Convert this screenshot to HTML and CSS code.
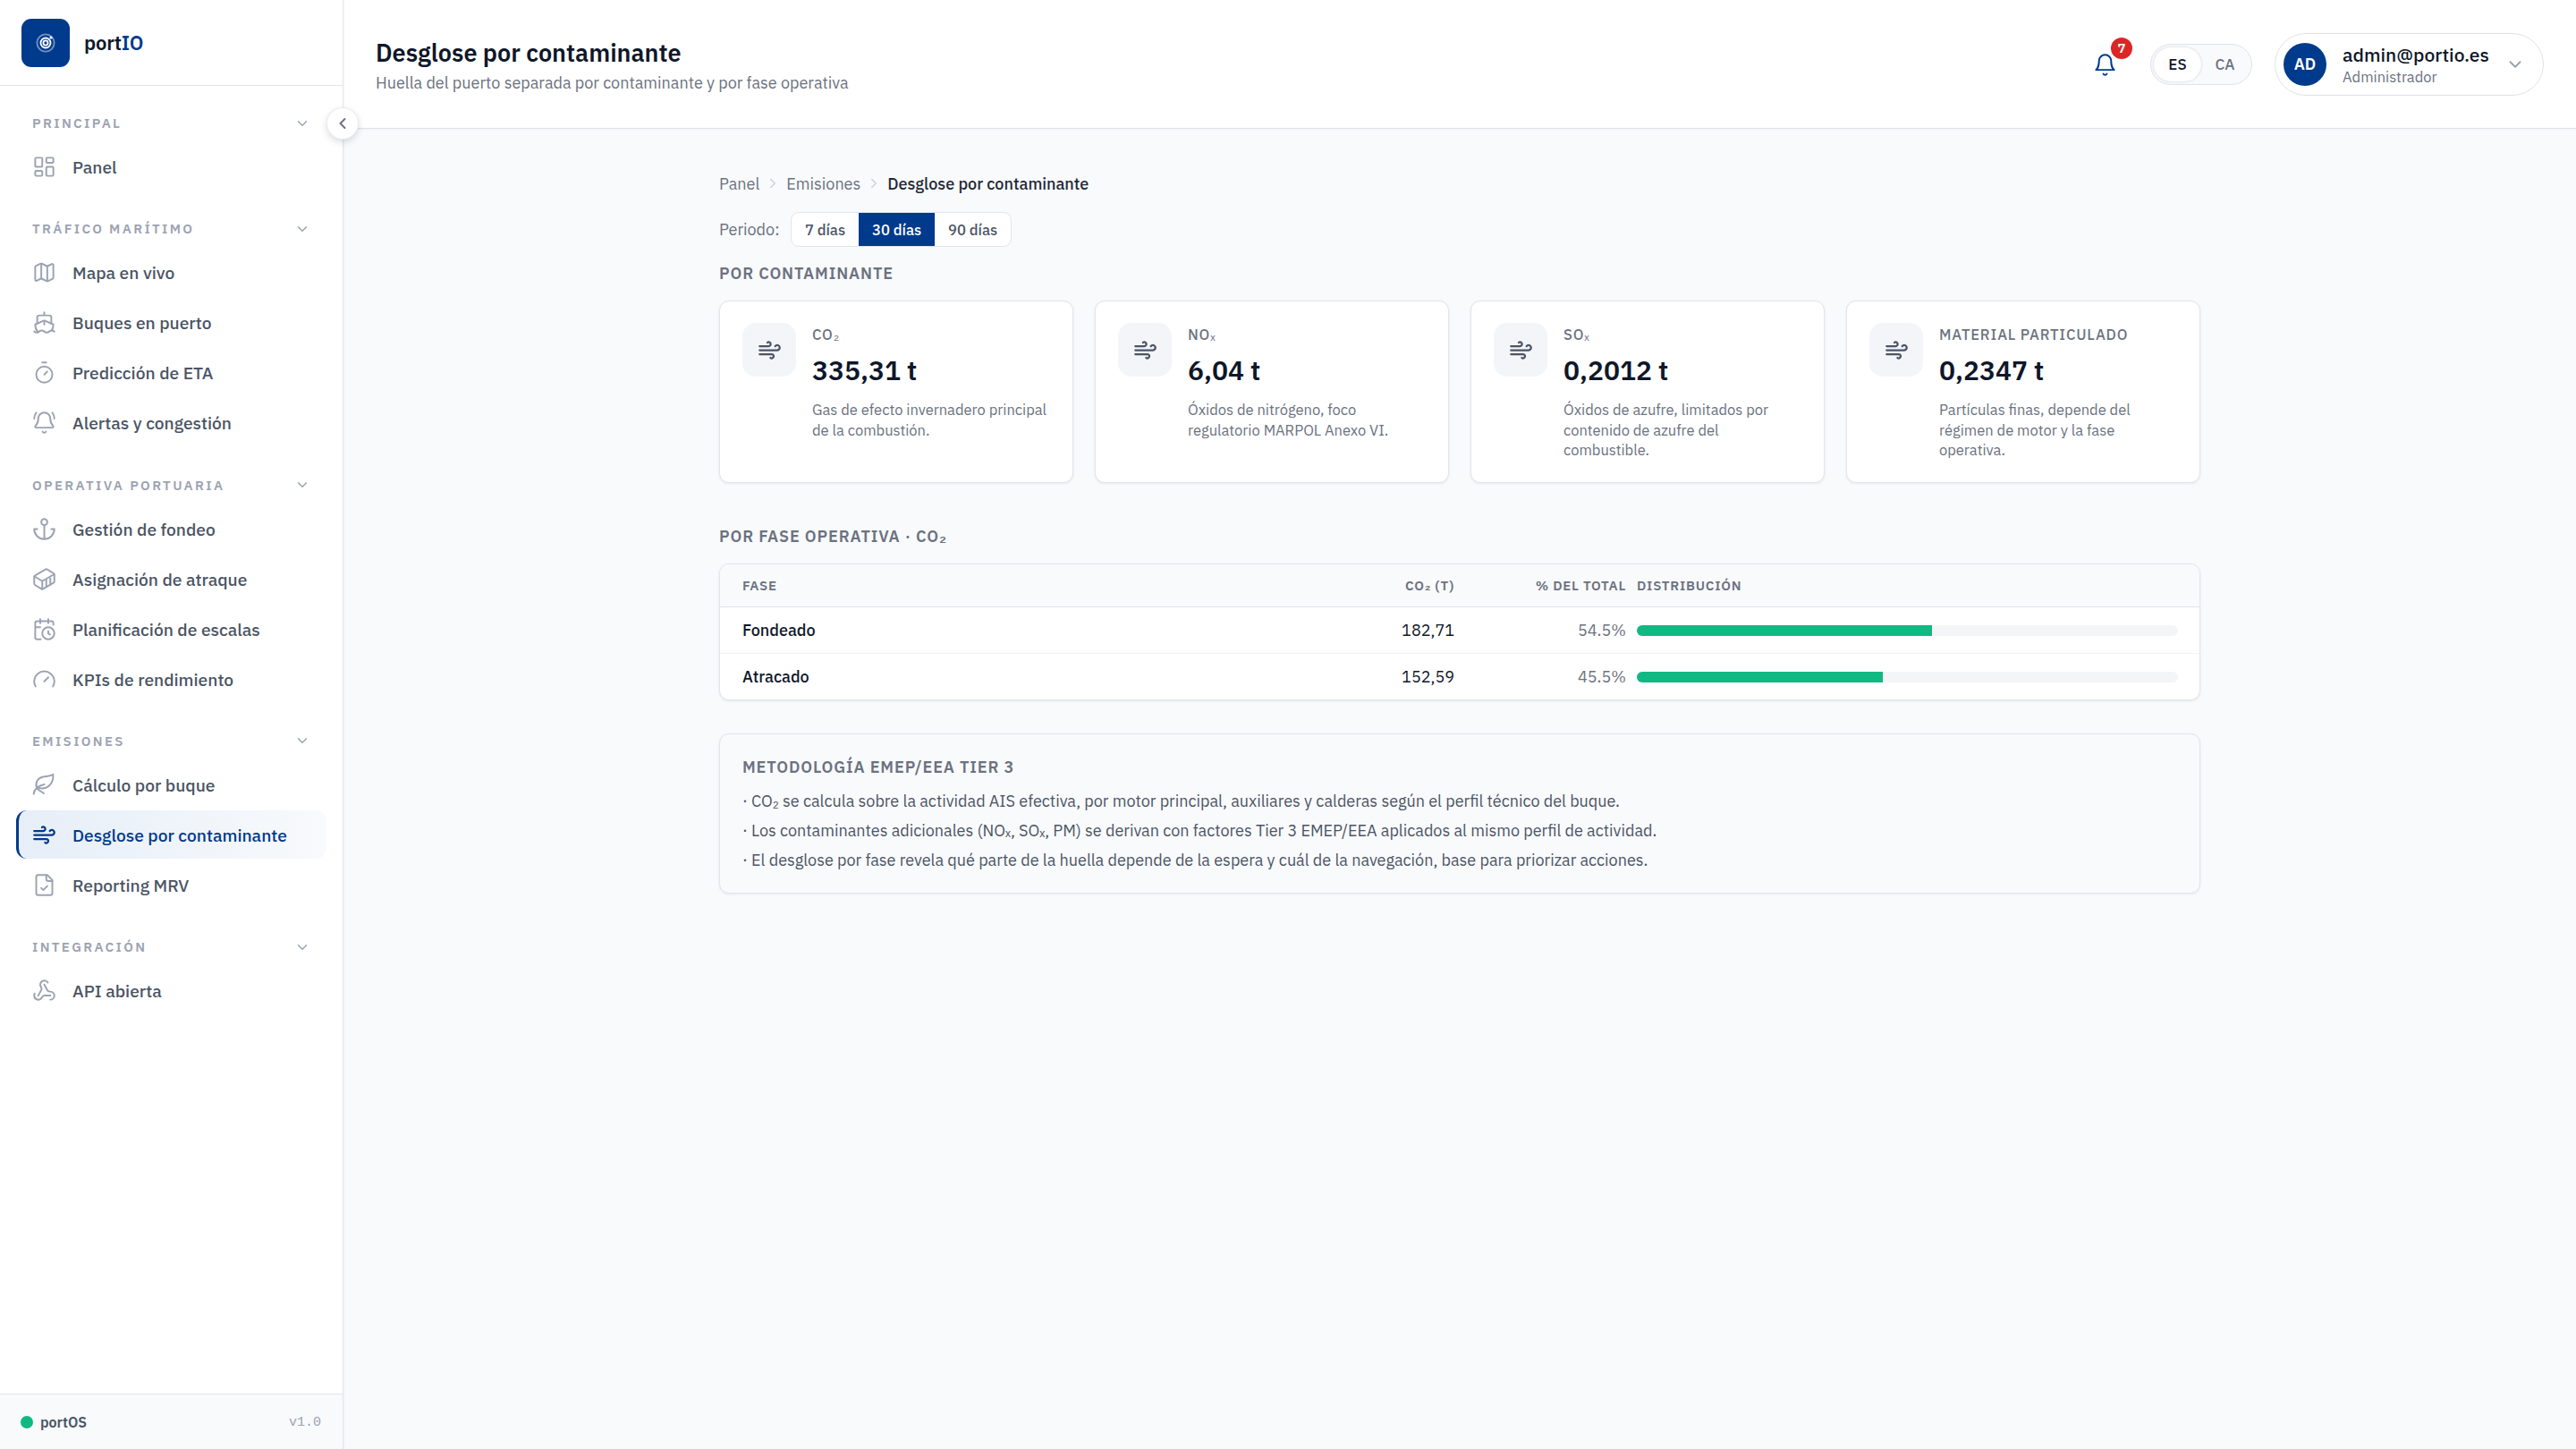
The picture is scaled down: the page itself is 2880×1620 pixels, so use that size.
FILE: index.html
```html
<!DOCTYPE html>
<html lang="es">
<head>
  <meta charset="UTF-8" />
  <meta name="viewport" content="width=device-width, initial-scale=1.0"/>
  <title>Desglose por contaminante - portIO</title>
  <link rel="stylesheet" href="styles.css">
</head>
<body>
  <svg class="sprite" aria-hidden="true">
    <symbol id="i-chevron" viewBox="0 0 24 24"><path d="m6 9 6 6 6-6"/></symbol>
    <symbol id="i-left" viewBox="0 0 24 24"><path d="m15 18-6-6 6-6"/></symbol>
    <symbol id="i-right" viewBox="0 0 24 24"><path d="m9 18 6-6-6-6"/></symbol>
    <symbol id="i-panel" viewBox="0 0 24 24"><rect x="3" y="3" width="7" height="9" rx="1"/><rect x="14" y="3" width="7" height="5" rx="1"/><rect x="14" y="12" width="7" height="9" rx="1"/><rect x="3" y="16" width="7" height="5" rx="1"/></symbol>
    <symbol id="i-map" viewBox="0 0 24 24"><path d="M14.106 5.553a2 2 0 0 0 1.788 0l3.659-1.83A1 1 0 0 1 21 4.619v12.764a1 1 0 0 1-.553.894l-4.553 2.277a2 2 0 0 1-1.788 0l-4.212-2.106a2 2 0 0 0-1.788 0l-3.659 1.83A1 1 0 0 1 3 19.381V6.618a1 1 0 0 1 .553-.894l4.553-2.277a2 2 0 0 1 1.788 0z"/><path d="M15 5.764v15M9 3.236v15"/></symbol>
    <symbol id="i-ship" viewBox="0 0 24 24"><path d="M12 10.189V14M12 2v3M19 13V7a2 2 0 0 0-2-2H7a2 2 0 0 0-2 2v6"/><path d="M19.38 20A11.6 11.6 0 0 0 21 14l-8.188-3.639a2 2 0 0 0-1.624 0L3 14a11.6 11.6 0 0 0 2.81 7.76"/><path d="M2 21c.6.5 1.2 1 2.5 1 2.5 0 2.5-2 5-2 1.3 0 1.9.5 2.5 1s1.2 1 2.5 1c2.5 0 2.5-2 5-2 1.3 0 1.9.5 2.5 1"/></symbol>
    <symbol id="i-timer" viewBox="0 0 24 24"><path d="M10 2h4M12 14l3-3"/><circle cx="12" cy="14" r="8"/></symbol>
    <symbol id="i-bellring" viewBox="0 0 24 24"><path d="M10.268 21a2 2 0 0 0 3.464 0M22 8c0-2.3-.8-4.3-2-6M4 2C2.8 3.7 2 5.7 2 8"/><path d="M3.262 15.326A1 1 0 0 0 4 17h16a1 1 0 0 0 .74-1.673C19.41 13.956 18 12.499 18 8A6 6 0 0 0 6 8c0 4.499-1.411 5.956-2.738 7.326"/></symbol>
    <symbol id="i-bell" viewBox="0 0 24 24"><path d="M18 8A6 6 0 0 0 6 8c0 7-3 9-3 9h18s-3-2-3-9M13.73 21a2 2 0 0 1-3.46 0"/></symbol>
    <symbol id="i-anchor" viewBox="0 0 24 24"><path d="M12 22V8M5 12H2a10 10 0 0 0 20 0h-3"/><circle cx="12" cy="5" r="3"/></symbol>
    <symbol id="i-container" viewBox="0 0 24 24"><path d="M22 7.7c0-.6-.4-1.2-.8-1.5l-6.3-3.9a1.72 1.72 0 0 0-1.7 0l-10.3 6c-.5.2-.9.8-.9 1.4v6.6c0 .5.4 1.2.8 1.5l6.3 3.9a1.72 1.72 0 0 0 1.7 0l10.3-6c.5-.3.9-1 .9-1.5Z"/><path d="M10 21.9V14L2.1 9.1M10 14l11.9-6.9M14 19.8v-8.1M18 17.5V9.4"/></symbol>
    <symbol id="i-calendar" viewBox="0 0 24 24"><path d="M16 14v2.2l1.6 1M16 2v4M21 7.5V6a2 2 0 0 0-2-2H5a2 2 0 0 0-2 2v14a2 2 0 0 0 2 2h3.5M3 10h5M8 2v4"/><circle cx="16" cy="16" r="6"/></symbol>
    <symbol id="i-gauge" viewBox="0 0 24 24"><path d="m12 14 4-4M3.34 19a10 10 0 1 1 17.32 0"/></symbol>
    <symbol id="i-leaf" viewBox="0 0 24 24"><path d="M5 15.500C2.500 11 4.500 5.500 11 4c4-.8 7-.6 9.700-2.500C21.500 7 18.500 15 10 15.500c-2.500 0-4-.3-5-1"/><path d="M1.500 21c.5-5 4-8 10.500-9.500M5 16l6.500 4.500"/></symbol>
    <symbol id="i-wind" viewBox="0 0 24 24"><path d="M12.8 19.6A2 2 0 1 0 14 16H2M17.500 8a2.500 2.500 0 1 1 2 4H2M9.800 4.400A2 2 0 1 1 11 8H2"/></symbol>
    <symbol id="i-file" viewBox="0 0 24 24"><path d="M15 2H6a2 2 0 0 0-2 2v16a2 2 0 0 0 2 2h12a2 2 0 0 0 2-2V7Z"/><path d="M14 2v4a2 2 0 0 0 2 2h4M9 15l2 2 4-4"/></symbol>
    <symbol id="i-webhook" viewBox="0 0 24 24"><path d="M18 16.98h-5.99c-1.1 0-1.95.94-2.48 1.9A4 4 0 0 1 2 17c.01-.7.2-1.4.57-2"/><path d="m6 17 3.130-5.780c.53-.97.1-2.180-.5-3.100a4 4 0 1 1 6.890-4.060"/><path d="m12 6 3.130 5.730C15.660 12.700 16.900 13 18 13a4 4 0 0 1 0 8"/></symbol>
  </svg>

  <div class="app">
    <aside class="sidebar">
      <div class="brand">
        <div class="brand-logo">
          <svg viewBox="0 0 24 24"><circle cx="12" cy="12" r="10.500" opacity=".45"/><circle cx="12" cy="12" r="6"/><circle cx="12" cy="12" r="2.800"/><circle class="dot" cx="18.500" cy="5.500" r="1.700"/></svg>
        </div>
        <span class="brand-name">port<b>IO</b></span>
      </div>
      <button class="collapse"><svg class="icon"><use href="#i-left"/></svg></button>

      <nav class="nav">
        <div class="nav-group">
          <div class="nav-title"><span>PRINCIPAL</span><svg class="icon"><use href="#i-chevron"/></svg></div>
          <a class="nav-item"><svg class="icon"><use href="#i-panel"/></svg><span>Panel</span></a>
        </div>
        <div class="nav-group">
          <div class="nav-title"><span>TRÁFICO MARÍTIMO</span><svg class="icon"><use href="#i-chevron"/></svg></div>
          <a class="nav-item"><svg class="icon"><use href="#i-map"/></svg><span>Mapa en vivo</span></a>
          <a class="nav-item"><svg class="icon"><use href="#i-ship"/></svg><span>Buques en puerto</span></a>
          <a class="nav-item"><svg class="icon"><use href="#i-timer"/></svg><span>Predicción de ETA</span></a>
          <a class="nav-item"><svg class="icon"><use href="#i-bellring"/></svg><span>Alertas y congestión</span></a>
        </div>
        <div class="nav-group">
          <div class="nav-title"><span>OPERATIVA PORTUARIA</span><svg class="icon"><use href="#i-chevron"/></svg></div>
          <a class="nav-item"><svg class="icon"><use href="#i-anchor"/></svg><span>Gestión de fondeo</span></a>
          <a class="nav-item"><svg class="icon"><use href="#i-container"/></svg><span>Asignación de atraque</span></a>
          <a class="nav-item"><svg class="icon"><use href="#i-calendar"/></svg><span>Planificación de escalas</span></a>
          <a class="nav-item"><svg class="icon"><use href="#i-gauge"/></svg><span>KPIs de rendimiento</span></a>
        </div>
        <div class="nav-group">
          <div class="nav-title"><span>EMISIONES</span><svg class="icon"><use href="#i-chevron"/></svg></div>
          <a class="nav-item"><svg class="icon"><use href="#i-leaf"/></svg><span>Cálculo por buque</span></a>
          <a class="nav-item active"><svg class="icon"><use href="#i-wind"/></svg><span>Desglose por contaminante</span></a>
          <a class="nav-item"><svg class="icon"><use href="#i-file"/></svg><span>Reporting MRV</span></a>
        </div>
        <div class="nav-group">
          <div class="nav-title"><span>INTEGRACIÓN</span><svg class="icon"><use href="#i-chevron"/></svg></div>
          <a class="nav-item"><svg class="icon"><use href="#i-webhook"/></svg><span>API abierta</span></a>
        </div>
      </nav>

      <div class="sidebar-footer">
        <span class="status-dot"></span>
        <span class="status-name">portOS</span>
        <span class="version">v1.0</span>
      </div>
    </aside>

    <div class="main">
      <header class="header">
        <div class="heading">
          <h1>Desglose por contaminante</h1>
          <p>Huella del puerto separada por contaminante y por fase operativa</p>
        </div>
        <div class="bell">
          <svg class="icon"><use href="#i-bell"/></svg>
          <span class="badge">7</span>
        </div>
        <div class="lang"><span class="on">ES</span><span>CA</span></div>
        <div class="user">
          <div class="avatar">AD</div>
          <div class="user-text">
            <span class="user-mail">admin@portio.es</span>
            <span class="user-role">Administrador</span>
          </div>
          <svg class="icon"><use href="#i-chevron"/></svg>
        </div>
      </header>

      <main class="content">
        <div class="crumbs">
          <span>Panel</span>
          <svg class="icon"><use href="#i-right"/></svg>
          <span>Emisiones</span>
          <svg class="icon"><use href="#i-right"/></svg>
          <span class="current">Desglose por contaminante</span>
        </div>

        <div class="period">
          <span class="period-label">Periodo:</span>
          <div class="segment">
            <button>7 días</button><button class="on">30 días</button><button>90 días</button>
          </div>
        </div>

        <h2>POR CONTAMINANTE</h2>
        <div class="cards">
          <div class="card">
            <div class="card-icon"><svg class="icon"><use href="#i-wind"/></svg></div>
            <div class="card-body">
              <span class="card-label">CO<i>₂</i></span>
              <span class="card-value">335,31 t</span>
              <p>Gas de efecto invernadero principal<br>de la combustión.</p>
            </div>
          </div>
          <div class="card">
            <div class="card-icon"><svg class="icon"><use href="#i-wind"/></svg></div>
            <div class="card-body">
              <span class="card-label">NO<i>ₓ</i></span>
              <span class="card-value">6,04 t</span>
              <p>Óxidos de nitrógeno, foco<br>regulatorio MARPOL Anexo VI.</p>
            </div>
          </div>
          <div class="card">
            <div class="card-icon"><svg class="icon"><use href="#i-wind"/></svg></div>
            <div class="card-body">
              <span class="card-label">SO<i>ₓ</i></span>
              <span class="card-value">0,2012 t</span>
              <p>Óxidos de azufre, limitados por<br>contenido de azufre del<br>combustible.</p>
            </div>
          </div>
          <div class="card">
            <div class="card-icon"><svg class="icon"><use href="#i-wind"/></svg></div>
            <div class="card-body">
              <span class="card-label">MATERIAL PARTICULADO</span>
              <span class="card-value">0,2347 t</span>
              <p>Partículas finas, depende del<br>régimen de motor y la fase<br>operativa.</p>
            </div>
          </div>
        </div>

        <h2>POR FASE OPERATIVA · CO<i>₂</i></h2>
        <div class="table">
          <div class="row head">
            <span>FASE</span><span class="num">CO<i>₂</i> (T)</span><span class="num">% DEL TOTAL</span><span>DISTRIBUCIÓN</span>
          </div>
          <div class="row">
            <span class="phase">Fondeado</span><span class="num">182,71</span><span class="num pct">54.5%</span>
            <div class="bar"><div class="fill" style="width: 54.5%"></div></div>
          </div>
          <div class="row">
            <span class="phase">Atracado</span><span class="num">152,59</span><span class="num pct">45.5%</span>
            <div class="bar"><div class="fill" style="width: 45.5%"></div></div>
          </div>
        </div>

        <section class="method">
          <h3>METODOLOGÍA EMEP/EEA TIER 3</h3>
          <p>· CO<i>₂</i> se calcula sobre la actividad AIS efectiva, por motor principal, auxiliares y calderas según el perfil técnico del buque.</p>
          <p>· Los contaminantes adicionales (NO<i>ₓ</i>, SO<i>ₓ</i>, PM) se derivan con factores Tier 3 EMEP/EEA aplicados al mismo perfil de actividad.</p>
          <p>· El desglose por fase revela qué parte de la huella depende de la espera y cuál de la navegación, base para priorizar acciones.</p>
        </section>
      </main>
    </div>
  </div>
</body>
</html>
```

FILE: styles.css
```css
* {
  margin: 0;
  padding: 0;
  box-sizing: border-box;
}

body {
  font-family: 'IBM Plex Sans', Roboto, 'Liberation Sans', sans-serif;
  font-size: 18px;
  color: #0f1729;
  background: #f9fafc;
}

button {
  font: inherit;
  border: none;
  background: none;
}

/* chemical subscripts */
i {
  font-family: 'Liberation Sans', sans-serif;
  font-style: normal;
  line-height: 1;
}

.sprite {
  display: none;
}

.icon {
  flex: none;
  width: 27px;
  height: 27px;
  fill: none;
  stroke: currentColor;
  stroke-width: 1.75;
  stroke-linecap: round;
  stroke-linejoin: round;
}

.app {
  display: flex;
  height: 1620px;
}

/* sidebar */
.sidebar {
  position: relative;
  z-index: 2;
  display: flex;
  flex-direction: column;
  flex: none;
  width: 384px;
  background: #fff;
  border-right: 1px solid #e2e5ea;
  box-shadow: 1px 0 3px rgba(15, 23, 42, 0.04);
}

.brand {
  display: flex;
  align-items: center;
  gap: 16px;
  height: 96px;
  padding: 0 24px;
  border-bottom: 1px solid #e2e5ea;
}

.brand-logo {
  display: flex;
  align-items: center;
  justify-content: center;
  width: 54px;
  height: 54px;
  border-radius: 11px;
  background: #003a8c;
}

.brand-logo svg {
  width: 22px;
  height: 22px;
  fill: none;
  stroke: #fff;
  stroke-width: 2;
}

.brand-logo .dot {
  fill: #fff;
  stroke: none;
}

.brand-name {
  font-size: 22px;
  font-weight: 600;
  letter-spacing: -0.2px;
}

.brand-name b {
  font-weight: 600;
  color: #003a8c;
}

.collapse {
  position: absolute;
  top: 121px;
  right: -17px;
  display: flex;
  align-items: center;
  justify-content: center;
  width: 34px;
  height: 34px;
  border-radius: 50%;
  background: #fff;
  color: #6b7280;
  box-shadow: 0 0 0 1px #e9ecf1, 0 3px 8px rgba(15, 23, 42, 0.18);
}

.collapse .icon {
  width: 20px;
  height: 20px;
  stroke-width: 2.4;
}

.nav {
  flex: 1;
  padding: 21.5px 18px 0;
}

.nav-group {
  margin-bottom: 22.3px;
}

.nav-title {
  display: flex;
  align-items: center;
  justify-content: space-between;
  height: 40px;
  margin-bottom: 2px;
  padding: 0 18px;
  font-size: 15px;
  font-weight: 600;
  letter-spacing: 2.34px;
  color: #9ca3b2;
}

.nav-title .icon {
  width: 18px;
  height: 18px;
  stroke-width: 2;
}

.nav-item {
  display: flex;
  align-items: center;
  gap: 18px;
  height: 54px;
  margin-bottom: 2px;
  padding-left: 18px;
  border-radius: 12px;
  font-size: 19.2px;
  font-weight: 500;
  color: #4b5565;
}

.nav-item .icon {
  color: #9ca3b2;
}

.nav-item.active {
  padding-left: 15px;
  border-left: 3px solid #003a8c;
  background: linear-gradient(90deg, #e6eef8, #f8fafc);
  color: #003a8c;
}

.nav-item.active .icon {
  color: #003a8c;
  stroke-width: 2;
}

.sidebar-footer {
  display: flex;
  align-items: center;
  gap: 8px;
  height: 62px;
  padding: 0 24px 0 23px;
  border-top: 1px solid #e2e5ea;
  background: #f9fafc;
}

.status-dot {
  width: 14px;
  height: 14px;
  border-radius: 50%;
  background: #10b981;
}

.status-name {
  flex: 1;
  font-size: 16px;
  font-weight: 600;
  color: #4b5565;
}

.version {
  padding-top: 2px;
  font-family: 'Liberation Mono', monospace;
  font-size: 15px;
  color: #9ca3b2;
}

/* header */
.main {
  flex: 1;
  min-width: 0;
}

.header {
  display: flex;
  align-items: center;
  height: 144px;
  padding: 1px 36px 0;
  background: #fff;
  border-bottom: 1px solid #dfe2e8;
  box-shadow: 0 1px 2px rgba(15, 23, 42, 0.04);
}

.heading {
  flex: 1;
  padding-top: 2px;
}

h1 {
  font-size: 27px;
  line-height: 36px;
  font-weight: 600;
}

.heading p {
  margin-top: 3px;
  font-size: 18px;
  line-height: 26px;
  color: #6b7280;
}

.bell {
  position: relative;
  display: flex;
  margin-right: 37px;
  color: #003a8c;
}

.badge {
  position: absolute;
  top: -17px;
  right: -17px;
  width: 24px;
  height: 24px;
  border-radius: 50%;
  background: #dc2626;
  color: #fff;
  font-size: 15px;
  font-weight: 600;
  line-height: 24px;
  text-align: center;
}

.lang {
  display: flex;
  align-items: center;
  height: 46px;
  margin-right: 25px;
  padding: 3px;
  border: 1px solid #dfe2e8;
  border-radius: 23px;
  background: #f9fafc;
  font-size: 17px;
  font-weight: 500;
  color: #6b7280;
}

.lang span {
  width: 53px;
  line-height: 38px;
  text-align: center;
}

.lang .on {
  border-radius: 19px;
  background: #fff;
  color: #0f1729;
  box-shadow: 0 0 2px 1px #e2e5ea;
}

.user {
  display: flex;
  align-items: center;
  width: 301px;
  height: 70px;
  padding: 0 20px 0 9px;
  border: 1px solid #dfe2e8;
  border-radius: 35px;
}

.avatar {
  width: 48px;
  height: 48px;
  margin-right: 18px;
  border-radius: 50%;
  background: #003a8c;
  color: #fff;
  font-size: 18px;
  font-weight: 600;
  line-height: 48px;
  text-align: center;
}

.user-text {
  flex: 1;
  display: flex;
  flex-direction: column;
  align-items: flex-start;
  padding-top: 2px;
}

.user-mail {
  font-size: 21px;
  font-weight: 500;
  line-height: 26px;
}

.user-role {
  font-size: 16.5px;
  line-height: 24px;
  color: #6b7280;
}

.user .icon {
  width: 22px;
  height: 22px;
  color: #9ca3b2;
  stroke-width: 2.2;
}

/* content */
.content {
  width: 1656px;
  margin: 0 auto;
  padding-top: 47px;
}

.crumbs {
  display: flex;
  align-items: center;
  height: 28px;
  font-size: 18px;
  color: #6b7280;
}

.crumbs .icon {
  width: 18px;
  height: 18px;
  margin: 0 6px;
  color: #cbd0d9;
  stroke-width: 2;
}

.crumbs .current {
  font-weight: 500;
  color: #1f2937;
}

.period {
  display: flex;
  align-items: center;
  gap: 12.5px;
  height: 40px;
  margin-top: 17.5px;
  color: #6b7280;
}

.segment {
  display: flex;
  overflow: hidden;
  height: 39px;
  border: 1px solid #e2e5ea;
  border-radius: 9px;
  background: #fff;
}

.segment button {
  padding: 0 15px;
  font-size: 16.5px;
  font-weight: 500;
  color: #4b5565;
}

.segment .on {
  background: #003a8c;
  color: #fff;
}

h2 {
  margin-top: 15px;
  font-size: 18px;
  font-weight: 600;
  line-height: 27px;
  letter-spacing: 0.9px;
  color: #6b7280;
}

.cards {
  display: grid;
  grid-template-columns: repeat(4, 1fr);
  gap: 24px;
  margin: 17.5px 0 45.5px;
}

.card {
  display: flex;
  gap: 18px;
  height: 204px;
  padding: 24px 24px 24px 25px;
  border: 1px solid #e2e5ea;
  border-radius: 11px;
  background: #fff;
  box-shadow: 0 1px 3px rgba(15, 23, 42, 0.08);
}

.card-icon {
  display: flex;
  align-items: center;
  justify-content: center;
  width: 60px;
  height: 60px;
  border-radius: 15px;
  background: #f3f5f9;
  color: #4b5565;
}

.card-icon .icon {
  stroke-width: 2;
}

.card-body {
  display: flex;
  flex-direction: column;
  align-items: flex-start;
  padding-top: 1px;
}

.card-label {
  font-size: 16.5px;
  font-weight: 500;
  line-height: 24px;
  letter-spacing: 0.82px;
  color: #6b7280;
}

.card-value {
  margin-top: 8px;
  font-size: 30px;
  font-weight: 600;
  line-height: 40px;
}

.card p {
  margin-top: 13px;
  font-size: 16.5px;
  line-height: 22.5px;
  color: #6b7280;
}

.table {
  margin-top: 17.5px;
  overflow: hidden;
  border: 1px solid #e2e5ea;
  border-radius: 11px;
  background: #fff;
  box-shadow: 0 1px 3px rgba(15, 23, 42, 0.08);
}

.row {
  display: grid;
  grid-template-columns: 604px 180px 180px 605px;
  column-gap: 12px;
  align-items: center;
  height: 52px;
  padding: 0 24px 0 25px;
  border-top: 1px solid #eff1f4;
}

.row.head {
  height: 47px;
  border-top: none;
  background: #f9fafc;
  font-size: 15px;
  font-weight: 600;
  letter-spacing: 0.75px;
  color: #6b7280;
}

.row.head + .row {
  border-top-color: #dfe2e8;
}

.num {
  text-align: right;
}

.phase {
  font-weight: 500;
}

.pct {
  color: #6b7280;
}

.bar {
  overflow: hidden;
  height: 12px;
  border-radius: 6px;
  background: #f3f5f7;
}

.fill {
  height: 100%;
  background: #10b981;
}

.method {
  height: 179px;
  margin-top: 37px;
  padding: 22.5px 25px;
  border: 1px solid #e2e5ea;
  border-radius: 11px;
  background: #f9fafc;
  box-shadow: 0 1px 3px rgba(15, 23, 42, 0.08);
}

h3 {
  margin-bottom: 8.5px;
  font-size: 18px;
  font-weight: 600;
  line-height: 27px;
  letter-spacing: 0.9px;
  color: #6b7280;
}

.method p {
  line-height: 33px;
  color: #4b5565;
}
```
